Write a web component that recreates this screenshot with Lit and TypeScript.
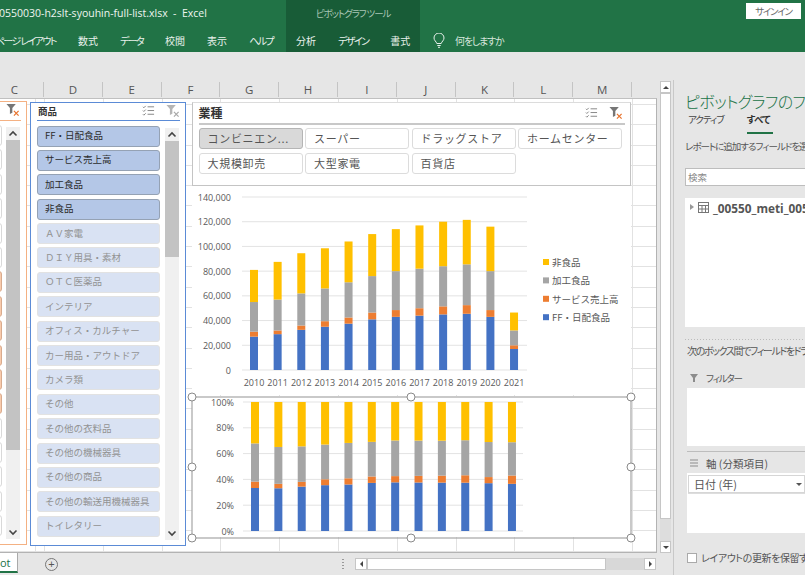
import { LitElement, html, css, svg } from "lit";
import { customElement } from "lit/decorators.js";

const YEARS = [2010, 2011, 2012, 2013, 2014, 2015, 2016, 2017, 2018, 2019, 2020, 2021];
// cumulative tops, in thousands: FF, service, processed, non-food
const DATA = [
  [27, 31, 55, 81], [29, 32, 57, 87.5], [32.5, 36, 62, 94.5], [35, 39.5, 66, 98.5],
  [37.5, 42.5, 71, 104], [41, 46.5, 76, 110], [43, 48.5, 80, 114], [44, 50, 82, 117],
  [45, 51.5, 84, 120], [45.5, 52.5, 85.5, 121.5], [43, 48.5, 80, 116], [17, 20, 32, 46.5],
];
const SERIES = ["#4472c4", "#ed7d31", "#a5a5a5", "#ffc000"];
const LEGEND = [
  ["非食品", "#ffc000"], ["加工食品", "#a5a5a5"], ["サービス売上高", "#ed7d31"], ["FF・日配食品", "#4472c4"],
];
const PRODUCTS: [string, boolean][] = [
  ["FF・日配食品", true], ["サービス売上高", true], ["加工食品", true], ["非食品", true],
  ["ＡＶ家電", false], ["ＤＩＹ用具・素材", false], ["ＯＴＣ医薬品", false], ["インテリア", false],
  ["オフィス・カルチャー", false], ["カー用品・アウトドア", false], ["カメラ類", false], ["その他", false],
  ["その他の衣料品", false], ["その他の機械器具", false], ["その他の商品", false],
  ["その他の輸送用機械器具", false], ["トイレタリー", false],
];
const INDUSTRIES = ["コンビニエン...", "スーパー", "ドラッグストア", "ホームセンター", "大規模卸売", "大型家電", "百貨店"];
const COLUMNS = ["C", "D", "E", "F", "G", "H", "I", "J", "K", "L", "M"];

const multiIcon = html`<svg class="ic" width="13" height="12" viewBox="0 0 14 12" fill="none" stroke="#7f7f7f" stroke-width="1"><path d="M6 1.5h7M6 5.5h7M6 9.5h7"/><path d="M1 1.5l1 1 2-2M1 5.5l1 1 2-2M1 9.5l1 1 2-2"/></svg>`;
const clearIcon = (active: boolean) => html`<svg class="ic" width="14" height="14" viewBox="0 0 15 15"><path d="M0.5 1h10l-3.7 4.4v5l-2.6 1.5V5.4z" fill="${active ? "#767676" : "#b5b5b5"}"/><path d="M8.5 8.5l5 5M13.5 8.5l-5 5" stroke="${active ? "#e8722c" : "#a8a8a8"}" stroke-width="1.3"/></svg>`;
const chevron = (up: boolean) => html`<svg width="10" height="7" viewBox="0 0 10 7" fill="none" stroke="#444" stroke-width="1.6"><path d="${up ? "M1.5 5.5L5 2l3.5 3.5" : "M1.5 1.5L5 5l3.5-3.5"}"/></svg>`;

@customElement("app-root")
export class AppRoot extends LitElement {
  static styles = css`
    :host { display: block; width: 805px; height: 575px; overflow: hidden; background: #e6e6e6;
      font-family: "Noto Sans CJK JP", "Open Sans", sans-serif; color: #444; }
    .app { display: flex; flex-direction: column; width: 805px; height: 575px; }
    .ribbon { display: flex; height: 52px; flex: none; background: #217346; color: #fff; font-size: 10px; font-feature-settings: "palt"; }
    .k { letter-spacing: -1.6px; }
    .r-left { width: 286px; flex: none; overflow: hidden; }
    .r-ctx { width: 134px; flex: none; background: #185c37; }
    .r-right { flex: 1; }
    .r-row { height: 26px; display: flex; align-items: center; white-space: nowrap; box-sizing: border-box; }
    .docname { font: 10.5px "Open Sans", sans-serif; margin-left: -1px; color: #eef5f0; }
    .tabs { justify-content: flex-end; gap: 22px; padding-right: 13px; padding-top: 2px; color: #e9f1ec; }
    .ctx-label { justify-content: center; font-size: 9.5px; color: #a9c6b5; letter-spacing: -1.1px; }
    .ctx-tabs { gap: 22px; padding: 2px 0 0 10px; color: #e9f1ec; }
    .signin-row { justify-content: flex-end; padding: 0 4px 5px 0; }
    .signin { width: 55px; height: 16px; background: #fff; color: #666; font-size: 9.5px; letter-spacing: -1.2px; display: flex;
      align-items: center; justify-content: center; }
    .tell { padding: 2px 0 0 13px; gap: 10px; color: #d5e5db; }
    .tell span { letter-spacing: -1.2px; }
    .band { height: 28px; flex: none; background: #e6e6e6; }
    .main { flex: 1; display: flex; min-height: 0; }
    .work { width: 673px; flex: none; display: flex; flex-direction: column; border-right: 1px solid #c8c8c8; box-sizing: content-box; }
    .cols { height: 18px; flex: none; display: flex; font: 11.5px "Open Sans", sans-serif; color: #555; }
    .col { width: 58.8px; flex: none; display: flex; align-items: center; justify-content: center;
      border-right: 1px solid #c4c4c4; box-sizing: border-box; height: 15px; margin-top: 2px; }
    .col.first { width: 44px; padding-left: 0; justify-content: flex-end; padding-right: 25px; }
    .sheet-row { flex: 1; display: flex; min-height: 0; }
    .sheet { position: relative; width: 657px; flex: none; overflow: hidden; background-color: #fff;
      border-top: 1px solid #c0c0c0; border-right: 1px solid #b3b3b3; border-bottom: 1px solid #b3b3b3; box-sizing: border-box;
      background-image:
        repeating-linear-gradient(to right, #e2e2e2 0 1px, transparent 1px 58.8px),
        repeating-linear-gradient(to bottom, #e2e2e2 0 1px, transparent 1px 20.3px);
      background-position: 44px 0, 0 5px; }
    .vscroll { width: 11px; margin-left: 3px; flex: none; display: flex; flex-direction: column; background: #ddd; margin-top: -17px; }
    .sbtn { height: 12px; flex: none; background: #fff; border: 1px solid #c6c6c6; box-sizing: border-box; display: flex;
      align-items: center; justify-content: center; }
    .vthumb { flex: 1; background: #fff; border: 1px solid #c6c6c6; }
    .vrest { height: 22px; flex: none; }
    .arrow-u { width: 0; height: 0; border: 3px solid transparent; border-top: 0; border-bottom: 3px solid #444; }
    .arrow-d { width: 0; height: 0; border: 3px solid transparent; border-bottom: 0; border-top: 3px solid #444; }
    .arrow-l { width: 0; height: 0; border: 3px solid transparent; border-left: 0; border-right: 3px solid #444; }
    .arrow-r { width: 0; height: 0; border: 3px solid transparent; border-right: 0; border-left: 3px solid #444; }
    .bottom { height: 22px; flex: none; display: flex; align-items: center; }
    .sheettab { width: 18px; height: 20px; margin-top: -2px; background: #fff; border-right: 1px solid #aaa;
      border-bottom: 2px solid #217346; box-sizing: border-box; font: 11px "Open Sans", sans-serif; color: #217346;
      display: flex; align-items: center; justify-content: flex-start; overflow: hidden; }
    .plus { margin-left: 27px; width: 13px; height: 13px; border: 1px solid #777; border-radius: 50%; box-sizing: border-box;
      display: flex; align-items: center; justify-content: center; color: #555; font: 11px/1 "Liberation Sans", sans-serif; }
    .dots { margin-left: 284px; width: 2px; height: 10px; flex: none;
      background-image: repeating-linear-gradient(to bottom, #999 0 1px, transparent 1px 3px); }
    .hscroll { margin-left: 11px; width: 301px; height: 12px; flex: none; display: flex; background: #d8d8d8; }
    .hthumb { width: 239px; background: #fff; border: 1px solid #c6c6c6; box-sizing: border-box; }
    .hgap { flex: 1; }
    .hbtn { width: 12px; background: #fff; border: 1px solid #c6c6c6; box-sizing: border-box; display: flex;
      align-items: center; justify-content: center; }

    .slicer { position: absolute; background: #fff; box-sizing: border-box; display: flex; flex-direction: column; padding: 0 5px 0 6px; }
    .s-orange { left: -130px; top: 2px; width: 157px; height: 444px; border: 1.5px solid #f4b183; }
    .s-blue { left: 30px; top: 2.5px; width: 156px; height: 444px; border: 1.5px solid #5b8bd6; }
    .s-head { height: 18.5px; flex: none; box-sizing: border-box; display: flex; align-items: center; justify-content: space-between;
      font-size: 9.5px; font-weight: 700; color: #333; border-bottom: 1.5px solid #5b8bd6; padding: 0 0 1px 1px; }
    .s-orange .s-head { border-bottom-color: #f4b183; justify-content: flex-end; padding-right: 1px; }
    .s-icons { display: flex; align-items: center; gap: 11px; }
    .s-body { flex: 1; display: flex; gap: 5px; padding-top: 4.5px; min-height: 0; overflow: hidden; padding-bottom: 5px; }
    .s-orange .s-body { gap: 4px; }
    .s-list { width: 123px; flex: none; display: flex; flex-direction: column; gap: 3.4px; overflow: hidden; }
    .s-orange .s-list { width: 125px; }
    .item { height: 21px; flex: none; box-sizing: border-box; border-radius: 3px; font-size: 9.5px; display: flex; align-items: center;
      padding: 0 0 2px 7px; white-space: nowrap; overflow: hidden; background: #d9e2f3; border: 1px solid #e2e2e2; color: #929292; }
    .item.on { background: #b4c7e7; border: 1px solid #95a2b4; color: #2c2c2c; }
    .item.o-on { background: #f8cbad; border: 1px solid #d9ab8d; }
    .item.o-off { background: #fff; border: 1px solid #d9d9d9; }
    .s-scroll { width: 14px; flex: none; margin-top: 2px; background: #f0f0f0; display: flex; flex-direction: column; }
    .s-arrow { height: 13px; flex: none; display: flex; align-items: center; justify-content: center; }
    .s-thumb { height: 116px; flex: none; background: #c3c3c3; }
    .s-orange .s-thumb { height: 310px; }
    .s-rest { flex: 1; }

    .s-ind { position: absolute; left: 192px; top: 2.5px; width: 439px; height: 84px; background: #fff; box-sizing: border-box;
      border: 1.5px solid #c4c4c4; border-top-color: #dcdcdc; padding: 0 5.5px; display: flex; flex-direction: column; }
    .ind-head { height: 22px; flex: none; box-sizing: border-box; display: flex; align-items: center; justify-content: space-between;
      font-size: 12px; font-weight: 700; color: #333; border-bottom: 2px solid #c8c8c8; padding-right: 2px; }
    .ind-grid { display: grid; grid-template-columns: repeat(4, 104px); gap: 3.6px 2.5px; padding-top: 3px; }
    .ind-btn { height: 21.7px; box-sizing: border-box; border: 1px solid #dcdcdc; border-radius: 3px; font-size: 11px;
      letter-spacing: 0.7px; color: #555; padding: 0 0 1px 8px; display: flex; align-items: center; white-space: nowrap; background: #fff; }
    .ind-btn.on { background: #d9d9d9; border-color: #b5b5b5; }

    .chart { position: absolute; left: 192px; width: 439px; overflow: visible; display: block; }
    .c-top { top: 86px; height: 210px; background: #fff; }
    .c-bot { top: 297px; height: 141px; background: #fff; }
    .axis { font: 9px "Open Sans", sans-serif; fill: #595959; }
    .leg { font: 9.5px "Noto Sans CJK JP", sans-serif; fill: #595959; }

    .panel { flex: 1; min-width: 0; overflow: hidden; white-space: nowrap; background: #e6e6e6; padding: 11px 0 0 11px; font-size: 9.5px; color: #555; display: flex; flex-direction: column; font-feature-settings: "palt"; }
    .p-title { font-size: 16px; line-height: 20px; color: #217346; font-weight: 300; letter-spacing: -0.6px; }
    .p-tabs { display: flex; gap: 23px; padding: 1px 0 0 3px; height: 22px; box-sizing: border-box; align-items: flex-start; color: #444; }
    .p-tab-act { letter-spacing: -1px; }
    .p-tab-on { font-weight: 700; color: #333; border-bottom: 2px solid #217346; width: 26px; height: 20px; letter-spacing: -0.6px; }
    .p-hint { margin-top: 6px; line-height: 14px; letter-spacing: -1px; }
    .p-search { margin-top: 15px; height: 18px; background: #fff; border: 1px solid #bdbdbd; border-right: 0; box-sizing: border-box;
      padding-left: 2px; font-size: 9.5px; color: #888; display: flex; align-items: center; }
    .p-fields { margin-top: 12px; height: 129px; background: #fff; flex: none; padding: 2px 0 0 5px; box-sizing: border-box; display: flex;
      gap: 4px; align-items: flex-start; font: 700 11.8px "Open Sans", sans-serif; color: #555; }
    .tri { margin-top: 4px; width: 0; height: 0; flex: none; border: 3.5px solid transparent; border-right: 0; border-left: 4px solid #999; }
    .p-dots { margin-top: 12px; height: 1px; flex: none; background-image: repeating-linear-gradient(to right, #bbb 0 1px, transparent 1px 3px); }
    .p-drag { margin-top: 3px; line-height: 16px; font-size: 10px; padding-left: 2px; letter-spacing: -1.4px; }
    .p-area { display: flex; align-items: center; gap: 7px; padding-left: 4px; height: 14px; flex: none; }
    .lbl-filter { letter-spacing: -1.2px; }
    .p-box { margin-left: 2px; background: #fff; flex: none; box-sizing: border-box; }
    .b-filter { height: 58px; margin-top: 3px; }
    .p-sep { margin: 5px 0 0 2px; height: 1px; flex: none; background: #bdbdbd; }
    .b-axis { height: 60px; margin-top: 3px; padding: 2px 0 0 1px; }
    .pill { height: 18px; background: #fff; border: 1px solid #d6d6d6; box-sizing: border-box; display: flex; align-items: center;
      justify-content: space-between; padding: 0 2px 0 5px; font-size: 11px; box-shadow: 0 1px 0 #ddd; }
    .pill i { width: 0; height: 0; border: 3px solid transparent; border-bottom: 0; border-top: 3px solid #555; }
    .p-check { display: flex; align-items: center; gap: 4px; margin: 17px 0 0 2px; font-size: 10px; letter-spacing: -0.4px; }
    .box { width: 10px; height: 10px; background: #fff; border: 1px solid #aaa; flex: none; box-sizing: border-box; }
    .lbl-axis { font-size: 10.5px; }
    .first-area { margin-top: 12px; }
    .second-area { margin-top: 4px; }
    .tbl-ic { margin-top: 2px; flex: none; }
  `;

  private bars(x0: number, pitch: number, yZero: number, scale: (row: number[], v: number) => number) {
    return DATA.map((row, i) => {
      const cx = x0 + i * pitch;
      let prev = 0;
      return row.map((top, s) => {
        const a = scale(row, prev);
        const b = scale(row, top);
        prev = top;
        return svg`<rect x="${cx - 4}" y="${yZero - b}" width="8" height="${b - a}" fill="${SERIES[s]}"/>`;
      });
    });
  }

  private topChart() {
    const zero = 370, unit = 173 / 140;
    const ticks = [0, 20, 40, 60, 80, 100, 120, 140];
    return svg`<svg class="chart c-top" viewBox="192 185 439 210">
      ${ticks.map((t) => svg`<line x1="242" x2="527" y1="${zero - t * unit}" y2="${zero - t * unit}" stroke="#e3e3e3"/>
        <text class="axis" x="231" y="${zero - t * unit + 3.5}" text-anchor="end">${t === 0 ? "0" : `${t},000`}</text>`)}
      ${this.bars(254, 23.64, zero, (_r, v) => v * unit)}
      ${YEARS.map((y, i) => svg`<text class="axis" x="${254 + i * 23.64}" y="386" text-anchor="middle">${y}</text>`)}
      ${LEGEND.map(([name, c], i) => svg`<rect x="543" y="${259 + i * 18.4}" width="6" height="6" fill="${c}"/>
        <text class="leg" x="552" y="${266 + i * 18.4}">${name}</text>`)}
    </svg>`;
  }

  private bottomChart() {
    const zero = 531, h = 129;
    const handles = [[192, 397], [411, 397], [631, 397], [192, 467], [631, 467], [192, 538], [411, 538], [631, 538]];
    return svg`<svg class="chart c-bot" viewBox="192 396 439 141">
      ${[0, 20, 40, 60, 80, 100].map((t) => svg`<line x1="243" x2="523" y1="${zero - (t * h) / 100}" y2="${zero - (t * h) / 100}" stroke="#e3e3e3"/>
        <text class="axis" x="234" y="${zero - (t * h) / 100 + 3.5}" text-anchor="end">${t}%</text>`)}
      ${this.bars(255, 23.36, zero, (r, v) => (v / r[3]) * h)}
      <rect x="192" y="397" width="439" height="141" fill="none" stroke="#a6a6a6" stroke-width="1.2"/>
      ${handles.map(([x, y]) => svg`<circle cx="${x}" cy="${y}" r="4" fill="#fff" stroke="#8a8a8a" stroke-width="1"/>`)}
    </svg>`;
  }

  render() {
    return html`<div class="app">
      <div class="ribbon">
        <div class="r-left">
          <div class="r-row"><span class="docname">0550030-h2slt-syouhin-full-list.xlsx&nbsp; -&nbsp; Excel</span></div>
          <div class="r-row tabs"><span class="k">ページ レイアウト</span><span>数式</span><span class="k">データ</span><span>校閲</span><span>表示</span><span class="k">ヘルプ</span></div>
        </div>
        <div class="r-ctx">
          <div class="r-row ctx-label">ピボットグラフ ツール</div>
          <div class="r-row ctx-tabs"><span>分析</span><span class="k">デザイン</span><span>書式</span></div>
        </div>
        <div class="r-right">
          <div class="r-row signin-row"><div class="signin">サインイン</div></div>
          <div class="r-row tell">
            <svg width="12" height="15" viewBox="0 0 12 15" fill="none" stroke="#e9f1ec" stroke-width="1"><path d="M3.8 10.5C3.3 8.5 1 7.5 1 5a5 5 0 0 1 10 0c0 2.5-2.3 3.5-2.8 5.5z"/><path d="M4.3 12.5h3.4M5 14.3h2"/></svg>
            <span>何をしますか</span>
          </div>
        </div>
      </div>
      <div class="band"></div>
      <div class="main">
        <div class="work">
          <div class="cols">
            ${COLUMNS.map((c, i) => html`<div class="col ${i === 0 ? "first" : ""}">${c}</div>`)}
          </div>
          <div class="sheet-row">
            <div class="sheet">
              ${this.leftSlicer()}
              ${this.productSlicer()}
              ${this.topChart()}
              ${this.industrySlicer()}
              ${this.bottomChart()}
            </div>
            <div class="vscroll">
              <div class="sbtn"><span class="arrow-u"></span></div>
              <div class="vthumb"></div>
              <div class="vrest"></div>
              <div class="sbtn"><span class="arrow-d"></span></div>
            </div>
          </div>
          <div class="bottom">
            <div class="sheettab">ot</div>
            <div class="plus">+</div>
            <div class="dots"></div>
            <div class="hscroll">
              <div class="hbtn"><span class="arrow-l"></span></div>
              <div class="hthumb"></div>
              <div class="hgap"></div>
              <div class="hbtn"><span class="arrow-r"></span></div>
            </div>
          </div>
        </div>
        <div class="panel">
          <div class="p-title">ピボットグラフのフィールド</div>
          <div class="p-tabs"><span class="p-tab-act">アクティブ</span><span class="p-tab-on">すべて</span></div>
          <div class="p-hint">レポートに追加するフィールドを選択してください:</div>
          <div class="p-search">検索</div>
          <div class="p-fields">
            <span class="tri"></span>
            <svg class="tbl-ic" width="11" height="11" viewBox="0 0 11 11" fill="none" stroke="#777"><rect x=".5" y=".5" width="10" height="10"/><path d="M.5 3.5h10M.5 7h10M4 3.5v7M7.5 3.5v7"/></svg>
            <span>_00550_meti_00550030</span>
          </div>
          <div class="p-dots"></div>
          <div class="p-drag">次のボックス間でフィールドをドラッグしてください:</div>
          <div class="p-area first-area">
            <svg width="10" height="10" viewBox="0 0 10 10" fill="#8c8c8c"><path d="M1 1h8L6 5v4H4V5z"/></svg>
            <span class="lbl-filter">フィルター</span>
          </div>
          <div class="p-box b-filter"></div>
          <div class="p-sep"></div>
          <div class="p-area second-area">
            <svg width="10" height="8" viewBox="0 0 10 8" fill="none" stroke="#8c8c8c"><path d="M1 1h8M1 4h8M1 7h8"/></svg>
            <span class="lbl-axis">軸 (分類項目)</span>
          </div>
          <div class="p-box b-axis"><div class="pill"><span>日付 (年)</span><i></i></div></div>
          <div class="p-check"><span class="box"></span><span>レイアウトの更新を保留する</span></div>
        </div>
      </div>
    </div>`;
  }

  private scrollbar() {
    return html`<div class="s-scroll">
      <div class="s-arrow">${chevron(true)}</div>
      <div class="s-thumb"></div>
      <div class="s-rest"></div>
      <div class="s-arrow">${chevron(false)}</div>
    </div>`;
  }

  private leftSlicer() {
    const cls = (i: number) => (i >= 6 && i < 12 ? "o-on" : "o-off");
    return html`<div class="slicer s-orange">
      <div class="s-head"><div class="s-icons">${clearIcon(true)}</div></div>
      <div class="s-body">
        <div class="s-list">${Array.from({ length: 18 }, (_, i) => html`<div class="item ${cls(i)}"></div>`)}</div>
        ${this.scrollbar()}
      </div>
    </div>`;
  }

  private productSlicer() {
    return html`<div class="slicer s-blue">
      <div class="s-head"><span>商品</span><div class="s-icons">${multiIcon}${clearIcon(false)}</div></div>
      <div class="s-body">
        <div class="s-list">${PRODUCTS.map(([n, on]) => html`<div class="item ${on ? "on" : ""}">${n}</div>`)}</div>
        ${this.scrollbar()}
      </div>
    </div>`;
  }

  private industrySlicer() {
    return html`<div class="s-ind">
      <div class="ind-head"><span>業種</span><div class="s-icons">${multiIcon}${clearIcon(true)}</div></div>
      <div class="ind-grid">${INDUSTRIES.map((n, i) => html`<div class="ind-btn ${i === 0 ? "on" : ""}">${n}</div>`)}</div>
    </div>`;
  }
}
